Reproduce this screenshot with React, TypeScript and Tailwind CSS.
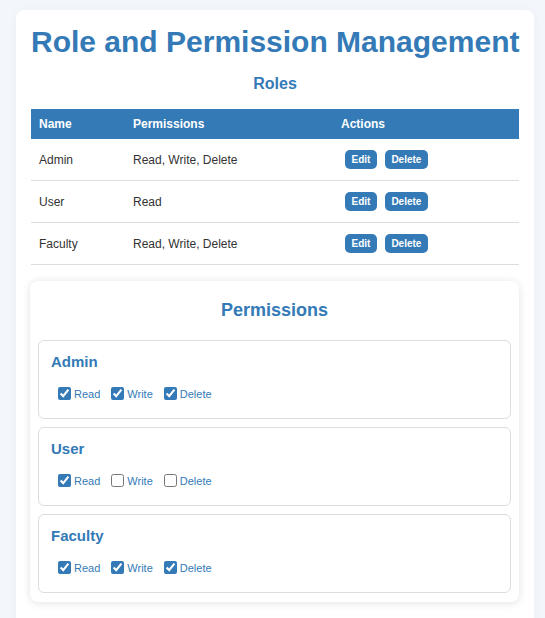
import React from "react";

interface Role {
  name: string;
  permissions: string[];
}

const roles: Role[] = [
  { name: "Admin", permissions: ["Read", "Write", "Delete"] },
  { name: "User", permissions: ["Read"] },
  { name: "Faculty", permissions: ["Read", "Write", "Delete"] },
];

const allPermissions = ["Read", "Write", "Delete"];

export default function App() {
  return (
    <div className="min-h-[618px] bg-[#f3f6fa] pt-[10px] leading-[normal] [font-family:'Liberation_Sans',Arial,sans-serif]">
      <div className="ml-4 w-[518px] rounded-lg bg-white px-[15px] pt-[15px] pb-10 shadow-[0_0_8px_rgba(0,0,0,0.04)]">
        <h1 className="whitespace-nowrap text-center text-[30px] font-bold text-[#337ab7]">Role and Permission Management</h1>
        <h2 className="mt-[16px] mb-[16px] text-center text-[16px] font-bold text-[#337ab7]">Roles</h2>
        <RolesTable />
        <PermissionsPanel />
      </div>
    </div>
  );
}

function RolesTable() {
  return (
    <table className="w-full border-collapse text-[12px]">
      <thead>
        <tr className="bg-[#337ab7] text-left text-white">
          <th className="w-[94px] px-2 py-2 font-bold">Name</th>
          <th className="w-[208px] px-2 py-2 font-bold">Permissions</th>
          <th className="px-2 py-2 font-bold">Actions</th>
        </tr>
      </thead>
      <tbody>
        {roles.map((role) => (
          <tr key={role.name} className="border-b border-[#dddddd] text-[#333333]">
            <td className="px-2 py-[11px]">{role.name}</td>
            <td className="px-2 py-[11px]">{role.permissions.join(", ")}</td>
            <td className="px-2 py-[11px]">
              <div className="flex">
                <ActionButton text="Edit" />
                <ActionButton text="Delete" />
              </div>
            </td>
          </tr>
        ))}
      </tbody>
    </table>
  );
}

function ActionButton({ text }: { text: string }) {
  return (
    <button className="mx-1 flex h-[19px] items-center rounded-[5px] bg-[#337ab7] px-[6.5px] text-[10px] font-bold text-white">
      {text}
    </button>
  );
}

function PermissionsPanel() {
  return (
    <div className="mt-[16px] ml-[-1px] rounded-lg bg-white px-2 pt-[19px] pb-[9px] shadow-[0_1px_8px_rgba(0,0,0,0.12)]">
      <h2 className="mb-[19px] text-center text-[18px] font-bold text-[#337ab7]">Permissions</h2>
      <div className="flex flex-col gap-2">
        {roles.map((role) => (
          <div key={role.name} className="h-[79px] rounded-md border border-[#dddddd] px-3 pt-3">
            <h3 className="mb-[14px] text-[15px] font-bold text-[#337ab7]">{role.name}</h3>
            <div className="flex items-center pl-[3px] text-[11px] text-[#337ab7]">
              {allPermissions.map((p) => (
                <label key={p} className="mr-[7px] flex items-center">
                  <input
                    type="checkbox"
                    defaultChecked={role.permissions.includes(p)}
                    className="mt-[3px] mr-[3px] mb-[3px] ml-1 h-[13px] w-[13px] accent-[#337ab7]"
                  />
                  {p}
                </label>
              ))}
            </div>
          </div>
        ))}
      </div>
    </div>
  );
}
